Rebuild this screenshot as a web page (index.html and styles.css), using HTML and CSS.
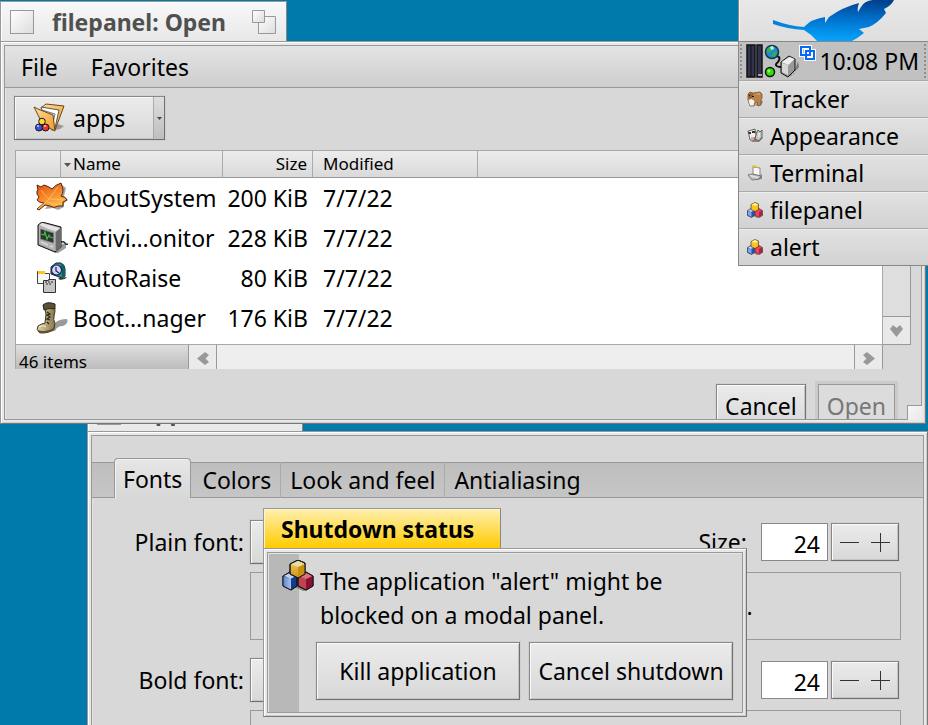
FILE: index.html
```html
<!DOCTYPE html>
<html lang="en">
<head>
<meta charset="utf-8">
<meta name="viewport" content="width=device-width, initial-scale=1">
<title>Desktop</title>
<link rel="stylesheet" href="styles.css">
</head>
<body>
<svg class="defs" aria-hidden="true">
  <defs>
    <linearGradient id="gold" x1="0" y1="0" x2="0" y2="1"><stop offset="0" stop-color="#f0d070"/><stop offset="1" stop-color="#d0920c"/></linearGradient>
    <linearGradient id="blueSide" x1="0" y1="0" x2="1" y2="0"><stop offset="0" stop-color="#5f86cc"/><stop offset="1" stop-color="#a9c0ec"/></linearGradient>
    <linearGradient id="leaf" x1="0" y1="0" x2="0.5" y2="1"><stop offset="0" stop-color="#e2500c"/><stop offset="0.5" stop-color="#f5842a"/><stop offset="1" stop-color="#ffc04a"/></linearGradient>
    <linearGradient id="feather" x1="0.7" y1="0" x2="0.6" y2="1"><stop offset="0" stop-color="#00408c"/><stop offset="0.45" stop-color="#0070cc"/><stop offset="1" stop-color="#06a4fc"/></linearGradient>
    <linearGradient id="folder" x1="0" y1="0" x2="1" y2="1"><stop offset="0" stop-color="#ffdf9e"/><stop offset="1" stop-color="#f0962a"/></linearGradient>
    <linearGradient id="boot" x1="0" y1="0" x2="1" y2="0"><stop offset="0" stop-color="#e2d4a6"/><stop offset="1" stop-color="#85764c"/></linearGradient>
    <symbol id="cubes" viewBox="0 0 32 32">
      <path d="M13 27l8 4 5-1 6-6-5-2z" fill="#000" opacity=".35"/>
      <g stroke="#15151c" stroke-width="1" stroke-linejoin="round">
        <path d="M1 16l7-4 7 3v11l-6 4-8-4z" fill="#123c8c"/>
        <path d="M1 16l8 3v11l-8-4z" fill="url(#blueSide)" stroke="none"/>
        <path d="M1.500 15.500l7-3 6 3-6 3.500z" fill="#bdd0f3" stroke="none"/>
        <path d="M1 16l7-4 7 3v11l-6 4-8-4z" fill="none"/>
        <path d="M16 16l8-4 7 4v10l-7 4-8-4z" fill="#bf4450"/>
        <path d="M24 19l7-3v10l-7 4z" fill="#8c1034" stroke="none"/>
        <path d="M17 16l7-3 6 3-6 3z" fill="#d87476" stroke="none"/>
        <path d="M16 16l8-4 7 4v10l-7 4-8-4z" fill="none"/>
        <path d="M8 4l8-4 7 3v11l-7 4-8-4z" fill="url(#gold)"/>
        <path d="M16 7l7-3v10l-7 4z" fill="#c8900f" stroke="none"/>
        <path d="M9 4l7-3 6 3-6 3z" fill="#e8dca8" stroke="none"/>
        <path d="M8 4l8-4 7 3v11l-7 4-8-4z" fill="none"/>
      </g>
    </symbol>
    <symbol id="cubes-small" viewBox="0 0 32 32">
      <path d="M12 28l8 4 12-6-3-4z" fill="#000" opacity=".3"/>
      <g stroke="#333" stroke-width="1.300" stroke-linejoin="round">
        <path d="M1 17l7-4 7 3v11l-6 4-8-4z" fill="#2351b5"/>
        <path d="M2 18l7 3v9l-7-4z" fill="#7fa6ee" stroke="none"/>
        <path d="M2 17l6-3 6 3-6 3z" fill="#c8d8ff" stroke="none"/>
        <path d="M16 17l8-4 7 4v10l-7 4-8-4z" fill="#e8455f"/>
        <path d="M24 20l6-3v9l-6 4z" fill="#b81c40" stroke="none"/>
        <path d="M8 5l8-4 7 3v11l-7 4-8-4z" fill="#ffc417"/>
        <path d="M9 5l7-3 6 3-6 3z" fill="#fff0a0" stroke="none"/>
      </g>
    </symbol>
    <symbol id="leaf-icon" viewBox="0 0 32 32">
      <path d="M9 27l8-1 5 2 6-3 0-4 4-3-4-4 2-8-4-3z" fill="#333" opacity=".45"/>
      <path d="M1 27L8 21Q3 21 1 18L3 15Q0 12 1 9L2 8L1 3L5 5L8 3Q12 4 16 7Q19 3 25 1L26 4L27 8Q27 12 25 14Q30 15 31 18L27 20L27 24L22 24Q18 27 14 24L9 23L3 28Z" fill="url(#leaf)" stroke="#5c220a" stroke-linejoin="round"/>
      <path d="M2 27L13 17 22 5M13 17Q8 13 5 8M13 17Q20 17 28 18M11 20l11 3" fill="none" stroke="#ffc765" stroke-width="1" opacity=".8"/>
    </symbol>
    <symbol id="monitor-icon" viewBox="0 0 32 32">
      <path d="M18 31l8-9 4-1v5l-8 5z" fill="#222" opacity=".45"/>
      <path d="M25 20q3-1 4 1t3 1" fill="none" stroke="#222" stroke-width="1.500"/>
      <path d="M2 3l4-3 19 5v20l-6 5L2 23z" fill="#9b9b9b" stroke="#111" stroke-linejoin="round"/>
      <path d="M3 3l3-2 18 5-5 4z" fill="#e4e4e4"/>
      <path d="M20 10l5-4v19l-5 5z" fill="#6a6a6a"/>
      <path d="M3 4l16 5v20L3 22z" fill="#b4b4b4"/>
      <path d="M4.500 7l13 4v10l-13-4z" fill="#30323a" stroke="#777" stroke-width=".8"/>
      <path d="M5 12l3 1 1-3 2 7 2-4 1 2 3 1" fill="none" stroke="#35c72b" stroke-width="1.200"/>
      <path d="M5 20l7 3M14 24l3 1" stroke="#e4e4e4" stroke-width="1.200"/>
    </symbol>
    <symbol id="raise-icon" viewBox="0 0 32 32">
      <path d="M22 16l9-1-2 2-5 1z" fill="#444"/>
      <path d="M15 5l5-4h5q4 2 4 6v7l-3 2-11-4z" fill="#2d8f8b" stroke="#0b2727"/>
      <path d="M25 1q4 2 4 6v7l-3 2z" fill="#0e6260"/>
      <circle cx="20.500" cy="8" r="5" fill="#d5d4f8" stroke="#222260" stroke-width="1.200"/>
      <path d="M20 5v4l3 2" fill="none" stroke="#1b1b66" stroke-width="1.200"/>
      <path d="M1.500 9.500h7v2h5v10h-12z" fill="#f6f6f6" stroke="#444"/>
      <path d="M2 9h7v3H2z" fill="#ffc41c"/>
      <path d="M7.500 18.500h5v-1h7v13h-12z" fill="#c4c4c4" stroke="#333"/>
      <path d="M9 20h2M12 20h2M15 20h2M10 22h2M13 22h2" stroke="#333"/>
    </symbol>
    <symbol id="boot-icon" viewBox="0 0 32 32">
      <path d="M12 30q5-3 8-10 4-3 11-3 2 4-4 7-6 0-8 5z" fill="#888" opacity=".85"/>
      <path d="M8 3L18 3Q20 10 18 14Q17 18 19 21L18 27Q10 32 3 30Q0 28 2 24Q5 22 9 21L10 12Z" fill="url(#boot)" stroke="#3b3522"/>
      <path d="M7 3Q11-1 19 2V7Q13 5 8 8Z" fill="#57533a" stroke="#292716"/>
      <path d="M11 10l3 2-3 1 3 2-3 2 3 1M11 20l2 2" fill="none" stroke="#2a2518" stroke-width="1.200"/>
      <path d="M2 28q7 3 16-2v2q-8 5-15 3z" fill="#5c502e"/>
      <path d="M3 25q4-3 7 0" stroke="#fff3c8" fill="none"/>
    </symbol>
    <symbol id="folder-icon" viewBox="0 0 32 32">
      <path d="M18 28l4-8 9 3-4 3z" fill="#555" opacity=".5"/>
      <path d="M8 5l5-4 18 2-9 24-9-16z" fill="url(#folder)" stroke="#6b461b"/>
      <path d="M8 4l18 3-4 18-7-1z" fill="#fff" stroke="#555"/>
      <path d="M9 7l13 4-3 13" fill="#e3e3e8" stroke="#777"/>
      <path d="M1 4l4 2 15 6 2 16-12-6z" fill="url(#folder)" stroke="#6b461b" stroke-linejoin="round"/>
      <g stroke="#151515"><circle cx="9" cy="18.500" r="3.300" fill="#ffd92e"/><circle cx="6" cy="24.500" r="3.500" fill="#3751e3"/><circle cx="12.500" cy="24.500" r="3.500" fill="#e03838"/></g>
      <circle cx="5" cy="23" r="1" fill="#c7d2ff"/><circle cx="12" cy="23" r="1" fill="#ffc5c5"/>
    </symbol>
    <symbol id="tracker-icon" viewBox="0 0 16 16">
      <path d="M8 15l7-2 1-3-4-1z" fill="#444" opacity=".5"/>
      <path d="M1 3l2-2 3 1 7-1 2 2v4l-1 2v5l-3 1-1-4H9l-2 4H3L1 9z" fill="#b9844c" stroke="#6a431c" stroke-width=".7"/>
      <path d="M1.500 9l3-1 3 2-1 4.500H3z" fill="#f4f4f4"/><path d="M1 3l5-1v4L3 8 1 6z" fill="#946030"/><path d="M2 4h1v1H2zM5 5h2v1H5z" fill="#201004"/><path d="M8 3l5-1v2z" fill="#d5a56c"/>
    </symbol>
    <symbol id="appearance-icon" viewBox="0 0 16 16">
      <path d="M4 14l8 0 4-4-3-3z" fill="#333" opacity=".5"/>
      <path d="M9 6l2-4 2 2 2-2v7l-3 4-4-2z" fill="#c4c4c4" stroke="#444" stroke-width=".8"/>
      <path d="M1 3l4-1 3-1 1 6-2 5-4 0-1-5z" fill="#eee" stroke="#444" stroke-width=".8"/>
      <path d="M1 4h3v2H2zM5 3h3v2H5z" fill="#333"/><path d="M4 9h3v3H4z" fill="#ee9b88"/><path d="M12 5v4" stroke="#fff"/>
    </symbol>
    <symbol id="terminal-icon" viewBox="0 0 16 16">
      <path d="M9 15l6-1V9l-4 3z" fill="#555" opacity=".6"/>
      <path d="M6 2l7 1v8l-7-2z" fill="#f8f8f8" stroke="#888"/>
      <path d="M5 0l5 1 1 2-5-1z" fill="#f0c40b"/>
      <path d="M1 10l4-1 9 2-2 3-7 1z" fill="#c4c4c4" stroke="#666" stroke-width=".8"/><path d="M3 10.500l8 2" stroke="#eee"/>
    </symbol>
  </defs>
</svg>

<main class="desktop">

  <section class="window appearance" aria-label="Appearance">
    <header class="tab"><button class="box" aria-label="Close Appearance"></button><h2>Appearance</h2></header>
    <div class="frame"><div class="inner">
      <nav class="tabs">
        <button class="active">Fonts</button><button>Colors</button><button>Look and feel</button><button>Antialiasing</button>
      </nav>
      <div class="fonts">
        <label class="name" for="plain">Plain font:</label>
        <div class="controls">
          <select class="btn" id="plain"><option>Noto Sans</option></select>
          <label for="plain-size">Size:</label>
          <input id="plain-size" type="text" value="24">
          <div class="stepper btn"><button aria-label="Smaller plain font"><svg viewBox="0 0 19 19"><path d="M0 9.500h19"/></svg></button><button aria-label="Larger plain font"><svg viewBox="0 0 19 19"><path d="M0 9.500h19M9.500 0v19"/></svg></button></div>
        </div>
        <p class="preview">The quick brown fox jumps over the lazy dog.</p>
        <label class="name" for="bold">Bold font:</label>
        <div class="controls">
          <select class="btn" id="bold"><option>Noto Sans</option></select>
          <label for="bold-size">Size:</label>
          <input id="bold-size" type="text" value="24">
          <div class="stepper btn"><button aria-label="Smaller bold font"><svg viewBox="0 0 19 19"><path d="M0 9.500h19"/></svg></button><button aria-label="Larger bold font"><svg viewBox="0 0 19 19"><path d="M0 9.500h19M9.500 0v19"/></svg></button></div>
        </div>
        <p class="preview"></p>
      </div>
    </div></div>
  </section>

  <section class="window filepanel" aria-label="filepanel: Open">
    <header class="tab"><button class="box" aria-label="Close"></button><h2>filepanel: Open</h2><button class="zoom" aria-label="Zoom"><svg viewBox="0 0 24 24"><defs><linearGradient id="zb" x1="0" y1="0" x2="1" y2="1"><stop offset="0" stop-color="#fff"/><stop offset="1" stop-color="#dcdcdc"/></linearGradient></defs><path d="M6.500 6.500h17v17h-17z"/><path d="M.5.5h12v12H.5z"/></svg></button></header>
    <div class="frame"><div class="inner">
      <nav class="menubar"><button>File</button><button>Favorites</button></nav>
      <div class="panel">
        <label class="folder btn"><svg><use href="#folder-icon"/></svg><select aria-label="Current folder"><option>apps</option></select><span class="drop"><svg viewBox="0 0 5 3"><path d="M0 0h5L2.500 3z"/></svg></span></label>
        <div class="list">
          <div class="view">
            <table>
              <colgroup><col class="c-icon"><col class="c-name"><col class="c-size"><col class="c-date"><col></colgroup>
              <thead><tr><th></th><th><svg class="sort" viewBox="0 0 7 4"><path d="M0 0h7L3.500 4z"/></svg>Name</th><th class="num">Size</th><th class="date">Modified</th><th></th></tr></thead>
              <tbody>
                <tr><td><svg><use href="#leaf-icon"/></svg></td><td>AboutSystem</td><td class="num">200 KiB</td><td class="date">7/7/22</td><td></td></tr>
                <tr><td><svg><use href="#monitor-icon"/></svg></td><td>Activi…onitor</td><td class="num">228 KiB</td><td class="date">7/7/22</td><td></td></tr>
                <tr><td><svg><use href="#raise-icon"/></svg></td><td>AutoRaise</td><td class="num">80 KiB</td><td class="date">7/7/22</td><td></td></tr>
                <tr><td><svg><use href="#boot-icon"/></svg></td><td>Boot…nager</td><td class="num">176 KiB</td><td class="date">7/7/22</td><td></td></tr>
              </tbody>
            </table>
          </div>
          <div class="vscroll"><button aria-label="Scroll down"><svg viewBox="0 0 13 12"><path d="M0 4l3-4 3.500 3L10 0l3 4-6.500 8z"/></svg></button></div>
          <div class="bottom">
            <span class="count">46 items</span>
            <button aria-label="Scroll left"><svg viewBox="0 0 12 13"><path d="M8 0L0 6.500 8 13l4-3-3.500-3.500L12 3z"/></svg></button>
            <div class="track"></div>
            <button aria-label="Scroll right"><svg viewBox="0 0 12 13"><path d="M4 0l8 6.500L4 13 0 10l3.500-3.500L0 3z"/></svg></button>
          </div>
        </div>
        <div class="actions"><button class="btn">Cancel</button><div class="default"><button class="btn" disabled>Open</button></div></div>
      </div>
      <span class="grip"></span>
    </div></div>
  </section>

  <section class="window dialog" role="dialog" aria-label="Shutdown status">
    <header class="tab yellow"><h2>Shutdown status</h2></header>
    <div class="frame"><div class="inner alert">
      <svg class="alert-icon"><use href="#cubes"/></svg>
      <div class="alert-body">
        <p>The application "alert" might be<br>blocked on a modal panel.</p>
        <div class="alert-buttons"><button class="btn">Kill application</button><button class="btn">Cancel shutdown</button></div>
      </div>
    </div></div>
  </section>

  <aside class="deskbar">
    <button class="logo" aria-label="Deskbar menu"><svg viewBox="0 0 190 41"><path d="M34 20Q50 26 65 27Q72 19 86 17L86 23L90 17Q104 7 120 3Q118 9 119 12L122 7Q125 1 134 0H155Q152 6 145 9L147 13Q139 23 130 27L120 29L125 33Q119 38 113 41H78Q72 34 65 30Q48 29 34 24Z" fill="url(#feather)"/></svg></button>
    <div class="tray">
      <svg viewBox="0 0 72 34">
        <path d="M1 1h8v32H1zM11 1h5v32h-5z" fill="#32344f" stroke="#111" stroke-width="1.500"/><path d="M5 1v32" stroke="#111"/><path d="M12 30h4v2h-4z" fill="#b58cc8"/>
        <path d="M29 12q7 0 3 6-5 4 2 5h4" fill="none" stroke="#111" stroke-width="2"/>
        <circle cx="26" cy="8" r="6.500" fill="#258bc8" stroke="#123845" stroke-width="1.500"/><path d="M21 5q2-3 6-3l1 3-4 3-3 1zM27 9l4-1-2 5-3-1z" fill="#30b252"/><path d="M24 3l3-1 1 3-3 1z" fill="#b9eeff"/>
        <path d="M40 32l8-2 4-13 1 6-8 9z" fill="#333" opacity=".5"/><path d="M35 18l8-6 6 3v11l-7 7-7-4z" fill="#999" stroke="#111"/><path d="M35.500 18l8-5 5 2-6 6z" fill="#eee"/><path d="M36 19l6 2v10l-6-3z" fill="#d7d7d7"/>
        <circle cx="24" cy="28" r="4.500" fill="#26e205" stroke="#111" stroke-width="1.500"/><circle cx="23" cy="27" r="1.500" fill="#9bff6d"/>
        <g fill="none" stroke="#fff" stroke-width="4"><path d="M55 3h9v8h-9zM60 7h8v8h-8z"/></g><g fill="none" stroke="#0868f8" stroke-width="2"><path d="M55 3h9v8h-9zM60 7h8v8h-8z"/></g>
      </svg>
      <time>10:08 PM</time>
    </div>
    <button class="app"><svg><use href="#tracker-icon"/></svg>Tracker</button>
    <button class="app"><svg><use href="#appearance-icon"/></svg>Appearance</button>
    <button class="app"><svg><use href="#terminal-icon"/></svg>Terminal</button>
    <button class="app"><svg><use href="#cubes-small"/></svg>filepanel</button>
    <button class="app"><svg><use href="#cubes-small"/></svg>alert</button>
  </aside>
</main>
</body>
</html>
```
FILE: styles.css
```css
* { box-sizing: border-box; }
body, h2, p { margin: 0; }
body, button, input, select { font: 23px/32px "Noto Sans", sans-serif; color: #000; }
button, select, input { border: 0; padding: 0; margin: 0; background: none; appearance: none; border-radius: 0; }
svg { display: block; flex: none; }
.defs { position: absolute; width: 0; height: 0; }

.desktop { position: relative; height: 100vh; min-height: 480px; overflow: hidden; background: #007aab; }

/* Windows */
.window { position: absolute; isolation: isolate; }
.tab { display: flex; align-items: center; width: fit-content; height: 41px; position: relative; z-index: 1; border: 1px solid #999; border-bottom: 0; border-right-color: #888; box-shadow: inset 1px 1px #fff; background: linear-gradient(#f8f8f8, #e8e8e8); }
.tab h2 { font-size: 23px; font-weight: 700; color: #505050; white-space: nowrap; }
.box { width: 24px; height: 24px; border: 1px solid #999; background: linear-gradient(135deg, #fff, #dcdcdc); }
.zoom svg { width: 24px; height: 24px; fill: url(#zb); stroke: #999; }
.frame { border: 1px solid #999; border-right-color: #777; border-bottom-color: #777; padding: 3px; background: #e8e8e8; box-shadow: inset 1px 1px #fff, inset -1px -1px #ccc; }
.inner { border: 1px solid #999; background: #d8d8d8; box-shadow: inset 1px 1px #e4e4e4; position: relative; }

.btn { border: 1px solid #888; border-right-color: #707070; border-bottom-color: #707070; background: linear-gradient(#ebebeb, #d8d8d8); box-shadow: inset 1px 1px #fafafa, inset -1px -1px #c4c4c4, 0 0 0 1px #cfcfcf; }

/* File panel */
.filepanel { top: 1px; left: 0; right: 2px; }
.filepanel .tab { height: 40px; gap: 18px; padding: 0 10px 0 9px; }
.filepanel .zoom { margin-left: 8px; }
.menubar { display: flex; gap: 33px; height: 42px; padding: 0 16px; background: linear-gradient(#e4e4e4, #cecece); border-bottom: 1px solid #999; }
.panel { padding: 8px 10px 0 9px; }
.folder { display: flex; align-items: center; width: 151px; height: 44px; }
.folder > svg { width: 32px; height: 32px; margin: 2px 0 0 18px; }
.folder select { flex: 1; min-width: 0; margin-left: 8px; }
.drop { display: flex; align-items: center; justify-content: center; width: 11px; height: 42px; border-left: 1px solid #aaa; background: linear-gradient(#dedede, #bebebe); }
.drop svg { width: 5px; height: 3px; fill: #444; }

.list { display: grid; grid-template-columns: 1fr 28px; margin: 10px 0 0 1px; }
.view { background: #fff; border: 1px solid #a8a8a8; height: 195px; overflow: hidden; }
table { width: 100%; table-layout: fixed; border-collapse: separate; border-spacing: 0; }
.c-icon { width: 45px; }
.c-name { width: 162px; }
.c-size { width: 90px; }
.c-date { width: 165px; }
th { position: relative; height: 27px; padding: 0 0 0 12px; font-size: 17px; line-height: 24px; font-weight: 400; text-align: left; border-right: 1px solid #aaa; border-bottom: 1px solid #999; background: linear-gradient(#ececec, #dadada); }
th:last-child { border-right: 0; }
td { height: 40px; padding: 0 0 0 12px; white-space: nowrap; }
td:first-child { padding-left: 20px; }
td svg { width: 32px; height: 32px; }
.num { text-align: right; padding: 0 5px 0 0; }
.date { padding-left: 10px; }
.sort { position: absolute; left: 3px; top: 12px; width: 7px; height: 4px; fill: #555; }
.vscroll { display: flex; flex-direction: column; justify-content: flex-end; border-right: 1px solid #999; border-bottom: 1px solid #999; background: #dedede; }
.vscroll button { display: grid; place-items: center; height: 28px; border-top: 1px solid #999; background: #e9e9e9; }
.vscroll svg { width: 13px; height: 12px; fill: #999; }
.bottom { display: flex; height: 24px; overflow: hidden; border-left: 1px solid #aaa; border-right: 1px solid #999; }
.bottom button { display: flex; justify-content: center; align-items: flex-start; width: 27px; padding-top: 7px; background: #ebebeb; }
.bottom svg { width: 12px; height: 13px; fill: #999; }
.count { width: 173px; padding: 5px 3px 0; font-size: 17px; line-height: 24px; border-right: 1px solid #999; background: linear-gradient(#dedede, #bcbcbc); }
.track { flex: 1; border: solid #999; border-width: 0 1px; background: #eee; }
.actions { display: flex; justify-content: flex-end; align-items: flex-start; gap: 9px; height: 50px; padding: 12px 13px 0 0; overflow: hidden; }
.actions .btn { display: block; height: 44px; padding: 0 8px; }
.actions > .btn { margin-top: 3px; }
.default { padding: 3px; background: #cacaca; }
.actions .btn:disabled { color: #777; border-color: #999; background: #dcdcdc; box-shadow: none; }
.grip { position: absolute; right: -1px; bottom: -1px; width: 15px; height: 15px; border: 1px solid #999; border-width: 1px 0 0 1px; background: linear-gradient(135deg, #f8f8f8, #e8e8e8); }

/* Appearance */
.appearance { top: 390px; left: 87px; right: 0; }
.appearance .tab { width: 216px; gap: 18px; padding: 0 9px; }
.appearance .box { margin-top: 4px; }
.tabs { display: flex; align-items: flex-end; height: 62px; padding-left: 22px; background: linear-gradient(#d8d8d8 26px, #999 26px, #999 27px, #bebebe 27px, #c6c6c6); box-shadow: inset 0 -1px #999; }
.tabs button { height: 36px; padding: 0 9px; border-right: 1px solid #aaa; }
.tabs button:last-child { border: 0; }
.tabs .active { height: 40px; padding: 0 8px; border: 1px solid #999; border-bottom: 0; border-radius: 4px 4px 0 0; background: linear-gradient(#e6e6e6, #d8d8d8); box-shadow: inset 1px 1px #f0f0f0; }
.tabs .active + button { padding-left: 11px; }
.fonts { display: grid; grid-template-columns: 152px 1fr; column-gap: 6px; padding: 22px 22px 0 0; }
.name { align-self: center; text-align: right; }
.controls { display: flex; align-items: center; }
.controls select { width: 200px; height: 44px; padding-left: 14px; }
.controls label { margin-left: auto; margin-right: 14px; }
.controls input { width: 67px; height: 38px; padding: 4px 7px 0 0; text-align: right; background: #fff; border: 1px solid #888; }
.stepper { display: flex; align-items: center; justify-content: space-between; width: 68px; height: 38px; padding: 0 8px; margin: 0 2px 0 3px; }
.stepper svg { width: 19px; height: 19px; stroke: #333; }
.preview { grid-column: 2; height: 68px; padding: 17px 14px; margin: 8px 0 18px; border: 1px solid #999; white-space: nowrap; }

/* Alert */
.dialog { top: 508px; left: 263px; }
.tab.yellow { padding: 0 26px 0 17px; box-shadow: inset 1px 1px #fff3c8; background: linear-gradient(#fff0b0, #ffcb00); }
.yellow h2 { color: #000; }
.dialog .tab { height: 40px; }
.alert { display: flex; background: linear-gradient(90deg, #b8b8b8 31px, #d8d8d8 31px); }
.alert-icon { width: 32px; height: 32px; margin: 7px 0 0 14px; }
.alert-body { padding: 11px 9px 12px 6px; }
.alert p { line-height: 34px; }
.alert-buttons { display: flex; gap: 9px; margin: 10px 0 0 -4px; }
.alert-buttons .btn { width: 204px; height: 58px; }

/* Deskbar */
.deskbar { position: absolute; top: 0; right: 0; width: 190px; border: 1px solid #888; border-width: 0 0 1px 1px; background: #d8d8d8; }
.logo { display: block; width: 100%; height: 41px; background: linear-gradient(#e8e8e8, #dedede); box-shadow: inset 1px 0 #f4f4f4; }
.logo svg { width: 190px; height: 41px; }
.tray { display: flex; align-items: center; justify-content: space-between; height: 40px; padding: 0 9px 0 7px; border-top: 1px solid #888; border-bottom: 1px solid #aaa; background: #c1c1c1; position: relative; }
.tray::before, .tray::after { content: ""; position: absolute; top: 2px; bottom: 2px; left: 1px; border-left: 2px dotted #909090; }
.tray::after { left: auto; right: 2px; }
.tray svg { width: 72px; height: 34px; }
.app { display: flex; align-items: center; gap: 7px; width: 100%; height: 37px; padding-left: 8px; border-bottom: 1px solid #aaa; background: linear-gradient(#e2e2e2, #d2d2d2); box-shadow: inset 0 1px #ececec; }
.app:last-child { height: 36px; border: 0; }
.app svg { width: 16px; height: 16px; }
```
